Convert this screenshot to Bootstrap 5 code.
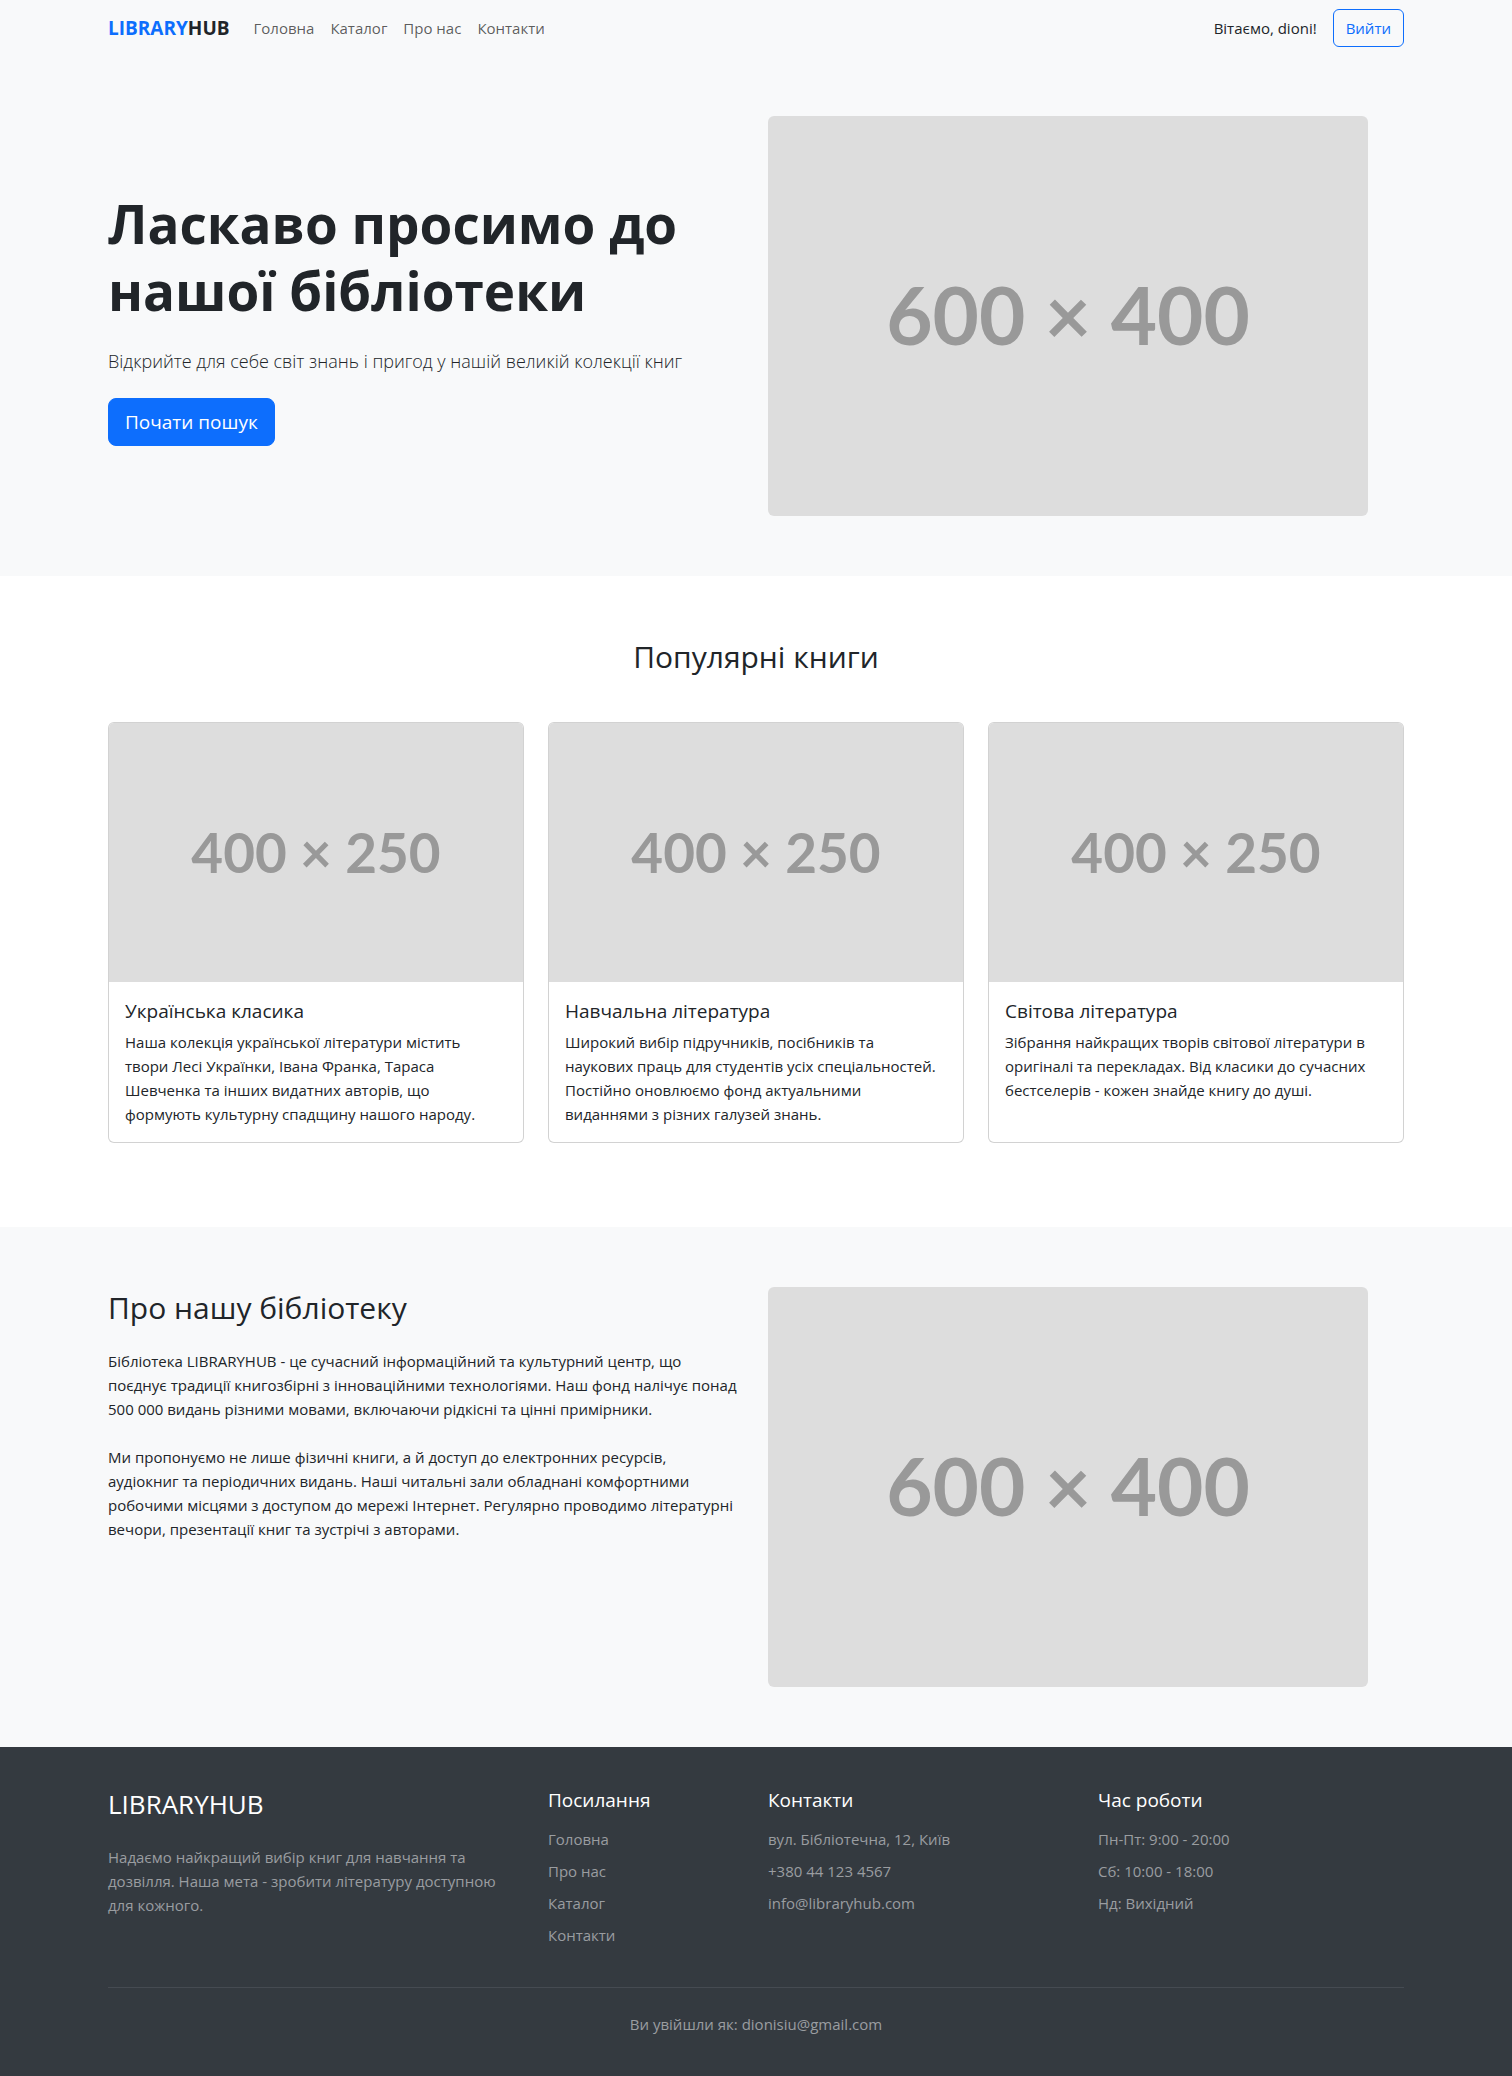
<!DOCTYPE html>
<html lang="uk">
<head>
<meta charset="utf-8">
<meta name="viewport" content="width=device-width, initial-scale=1">
<title>LIBRARYHUB</title>
<link href="https://cdn.jsdelivr.net/npm/bootstrap@5.3.0/dist/css/bootstrap.min.css" rel="stylesheet">
<style>
  body { font-family: "Open Sans", "Noto Sans", sans-serif; font-size: 15px; line-height: 24px; color: #212529; }
  .navbar { --bs-navbar-padding-y: 0; --bs-navbar-brand-color: #212529; min-height: 56px; }
  .navbar-brand { font-size: 19px; font-weight: 700; }
  .nav-link, .btn { font-size: 15px; line-height: 24px; }
  .btn-search { font-size: 19px; line-height: 30px; padding: 8px 16px; border-radius: 8px; }
  .section-pad { padding: 60px 0; }
  .hero-title { font-size: 53px; line-height: 67px; font-weight: 700; padding-top: 4px; margin-bottom: 20px; }
  .hero-text { font-size: 18px; line-height: 30px; font-weight: 300; padding-top: 2px; margin-bottom: 22px; }
  .section-title { font-size: 30px; line-height: 42px; font-weight: 400; margin-bottom: 20px; }
  .section-title.text-center { margin-bottom: 44px; }
  .item-title { font-size: 19px; line-height: 26px; font-weight: 400; margin-bottom: 6px; }
  .placeholder-pic { display: block; height: auto; background: #ddd; }
  .placeholder-pic text { font-family: Lato, sans-serif; font-weight: 700; fill: #999; text-anchor: middle; }
  .site-footer { background: #343a40; color: #fff; padding: 40px 0; }
  .footer-brand { font-size: 26px; line-height: 34px; font-weight: 400; }
  .footer-title { font-size: 19px; line-height: 26px; font-weight: 500; margin-bottom: 14px; }
  .footer-muted, .footer-muted a { color: #9a9da0; text-decoration: none; }
  .footer-muted a:hover { color: #fff; }
  .footer-bottom { border-top: 1px solid #454b52; margin-top: 32px; padding-top: 24px; }
</style>
</head>
<body>
<nav class="navbar navbar-expand-lg bg-light">
  <div class="container">
    <a class="navbar-brand" href="#"><span class="text-primary">LIBRARY</span>HUB</a>
    <button class="navbar-toggler" type="button" data-bs-toggle="collapse" data-bs-target="#mainNav" aria-controls="mainNav" aria-expanded="false" aria-label="Меню"><span class="navbar-toggler-icon"></span></button>
    <div class="collapse navbar-collapse" id="mainNav">
      <ul class="navbar-nav me-auto">
        <li class="nav-item"><a class="nav-link" href="#">Головна</a></li>
        <li class="nav-item"><a class="nav-link" href="#catalog">Каталог</a></li>
        <li class="nav-item"><a class="nav-link" href="#about">Про нас</a></li>
        <li class="nav-item"><a class="nav-link" href="#contacts">Контакти</a></li>
      </ul>
      <div class="d-flex align-items-center gap-3">
        <span>Вітаємо, dioni!</span>
        <button class="btn btn-outline-primary" type="button">Вийти</button>
      </div>
    </div>
  </div>
</nav>

<section class="section-pad bg-light">
  <div class="container">
    <div class="row align-items-center">
      <div class="col-lg-6">
        <h1 class="hero-title">Ласкаво просимо до нашої бібліотеки</h1>
        <p class="hero-text">Відкрийте для себе світ знань і пригод у нашій великій колекції книг</p>
        <a class="btn btn-primary btn-search" href="#catalog">Почати пошук</a>
      </div>
      <div class="col-lg-6">
        <svg class="placeholder-pic img-fluid rounded" width="600" height="400" viewBox="0 0 600 400" role="img"><text x="300" y="229" font-size="80">600 × 400</text></svg>
      </div>
    </div>
  </div>
</section>

<section class="section-pad" id="catalog">
  <div class="container">
    <h2 class="section-title text-center">Популярні книги</h2>
    <div class="row">
      <div class="col-md-4 mb-4">
        <div class="card h-100">
          <svg class="placeholder-pic card-img-top" viewBox="0 0 400 250" role="img"><text x="200" y="145" font-size="53">400 × 250</text></svg>
          <div class="card-body">
            <h5 class="item-title">Українська класика</h5>
            <p class="card-text pe-2">Наша колекція української літератури містить твори Лесі Українки, Івана Франка, Тараса Шевченка та інших видатних авторів, що формують культурну спадщину нашого народу.</p>
          </div>
        </div>
      </div>
      <div class="col-md-4 mb-4">
        <div class="card h-100">
          <svg class="placeholder-pic card-img-top" viewBox="0 0 400 250" role="img"><text x="200" y="145" font-size="53">400 × 250</text></svg>
          <div class="card-body">
            <h5 class="item-title">Навчальна література</h5>
            <p class="card-text pe-2">Широкий вибір підручників, посібників та наукових праць для студентів усіх спеціальностей. Постійно оновлюємо фонд актуальними виданнями з різних галузей знань.</p>
          </div>
        </div>
      </div>
      <div class="col-md-4 mb-4">
        <div class="card h-100">
          <svg class="placeholder-pic card-img-top" viewBox="0 0 400 250" role="img"><text x="200" y="145" font-size="53">400 × 250</text></svg>
          <div class="card-body">
            <h5 class="item-title">Світова література</h5>
            <p class="card-text pe-2">Зібрання найкращих творів світової літератури в оригіналі та перекладах. Від класики до сучасних бестселерів - кожен знайде книгу до душі.</p>
          </div>
        </div>
      </div>
    </div>
  </div>
</section>

<section class="section-pad bg-light" id="about">
  <div class="container">
    <div class="row">
      <div class="col-lg-6">
        <h2 class="section-title">Про нашу бібліотеку</h2>
        <p class="mb-4 pe-1">Бібліотека LIBRARYHUB - це сучасний інформаційний та культурний центр, що поєднує традиції книгозбірні з інноваційними технологіями. Наш фонд налічує понад 500 000 видань різними мовами, включаючи рідкісні та цінні примірники.</p>
        <p class="pe-1">Ми пропонуємо не лише фізичні книги, а й доступ до електронних ресурсів, аудіокниг та періодичних видань. Наші читальні зали обладнані комфортними робочими місцями з доступом до мережі Інтернет. Регулярно проводимо літературні вечори, презентації книг та зустрічі з авторами.</p>
      </div>
      <div class="col-lg-6">
        <svg class="placeholder-pic img-fluid rounded" width="600" height="400" viewBox="0 0 600 400" role="img"><text x="300" y="229" font-size="80">600 × 400</text></svg>
      </div>
    </div>
  </div>
</section>

<footer class="site-footer" id="contacts">
  <div class="container">
    <div class="row">
      <div class="col-lg-4">
        <h3 class="footer-brand mb-4">LIBRARYHUB</h3>
        <p class="footer-muted">Надаємо найкращий вибір книг для навчання та дозвілля. Наша мета - зробити літературу доступною для кожного.</p>
      </div>
      <div class="col-lg-2">
        <h5 class="footer-title">Посилання</h5>
        <ul class="list-unstyled footer-muted mb-0">
          <li class="mb-2"><a href="#">Головна</a></li>
          <li class="mb-2"><a href="#about">Про нас</a></li>
          <li class="mb-2"><a href="#catalog">Каталог</a></li>
          <li class="mb-2"><a href="#contacts">Контакти</a></li>
        </ul>
      </div>
      <div class="col-lg-3">
        <h5 class="footer-title">Контакти</h5>
        <ul class="list-unstyled footer-muted mb-0">
          <li class="mb-2">вул. Бібліотечна, 12, Київ</li>
          <li class="mb-2">+380 44 123 4567</li>
          <li class="mb-2">info@libraryhub.com</li>
        </ul>
      </div>
      <div class="col-lg-3">
        <h5 class="footer-title">Час роботи</h5>
        <ul class="list-unstyled footer-muted mb-0">
          <li class="mb-2">Пн-Пт: 9:00 - 20:00</li>
          <li class="mb-2">Сб: 10:00 - 18:00</li>
          <li class="mb-2">Нд: Вихідний</li>
        </ul>
      </div>
    </div>
    <div class="footer-bottom footer-muted text-center">Ви увійшли як: dionisiu@gmail.com</div>
  </div>
</footer>
<script src="https://cdn.jsdelivr.net/npm/bootstrap@5.3.0/dist/js/bootstrap.bundle.min.js"></script>
</body>
</html>
